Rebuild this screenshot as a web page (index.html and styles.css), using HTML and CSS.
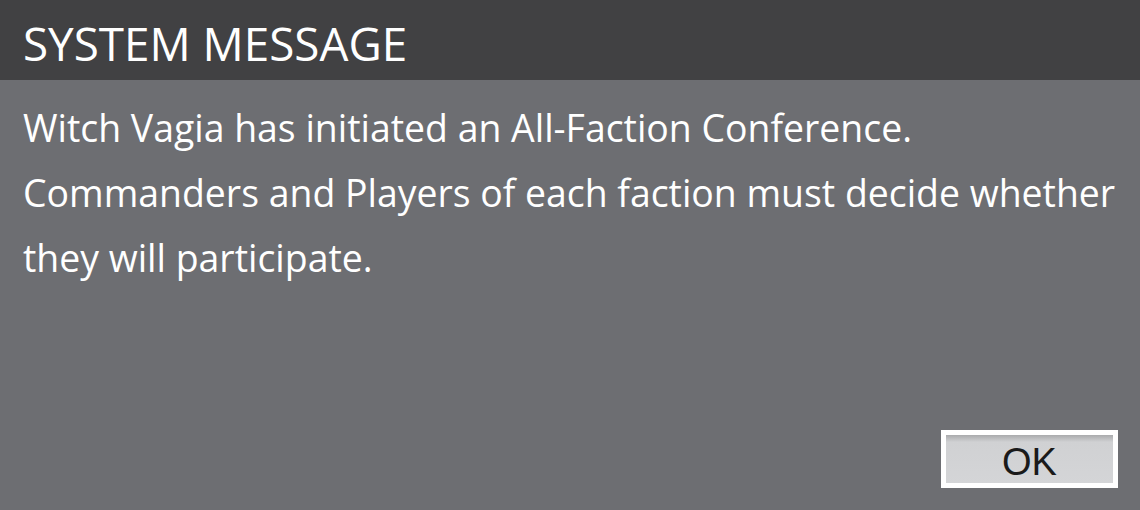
FILE: index.html
```html
<!DOCTYPE html>
<html>
<head>
<meta charset="utf-8">
<link rel="stylesheet" href="styles.css">
</head>
<body>
<div class="dialog">
  <div class="header">SYSTEM MESSAGE</div>
  <div class="content">
    <p class="message">Witch Vagia has initiated an All-Faction Conference.<br>Commanders and Players of each faction must decide whether<br>they will participate.</p>
    <div class="actions">
      <button class="ok">OK</button>
    </div>
  </div>
</div>
</body>
</html>
```

FILE: styles.css
```css
html, body {
  margin: 0;
  padding: 0;
}
body {
  width: 1140px;
  height: 510px;
  overflow: hidden;
  background: #6d6e72;
  font-family: "Open Sans", "Liberation Sans", sans-serif;
}
.dialog {
  display: flex;
  flex-direction: column;
  width: 1140px;
  height: 510px;
}
.header {
  height: 80px;
  flex: none;
  background: #414143;
  color: #ffffff;
  font-size: 45.8px;
  line-height: 86px;
  padding-left: 23px;
  box-sizing: border-box;
  overflow: hidden;
}
.content {
  flex: 1;
  display: flex;
  flex-direction: column;
  background: #6d6e72;
  padding: 15px 22px 22px 23px;
}
.message {
  margin: 0;
  color: #ffffff;
  font-size: 37.4px;
  line-height: 65px;
  white-space: nowrap;
}
.actions {
  margin-top: auto;
  display: flex;
  justify-content: flex-end;
}
.ok {
  width: 177px;
  height: 58px;
  box-sizing: border-box;
  border: 5px solid #ffffff;
  background: linear-gradient(to bottom, #a9aaac 0px, #d0d1d3 7px, #d4d5d7 100%);
  color: #1a1a1a;
  font-family: "Liberation Sans", "Open Sans", sans-serif;
  font-size: 38px;
  line-height: 44px;
  padding: 5px 0 0 0;
  margin: 0;
}
```
